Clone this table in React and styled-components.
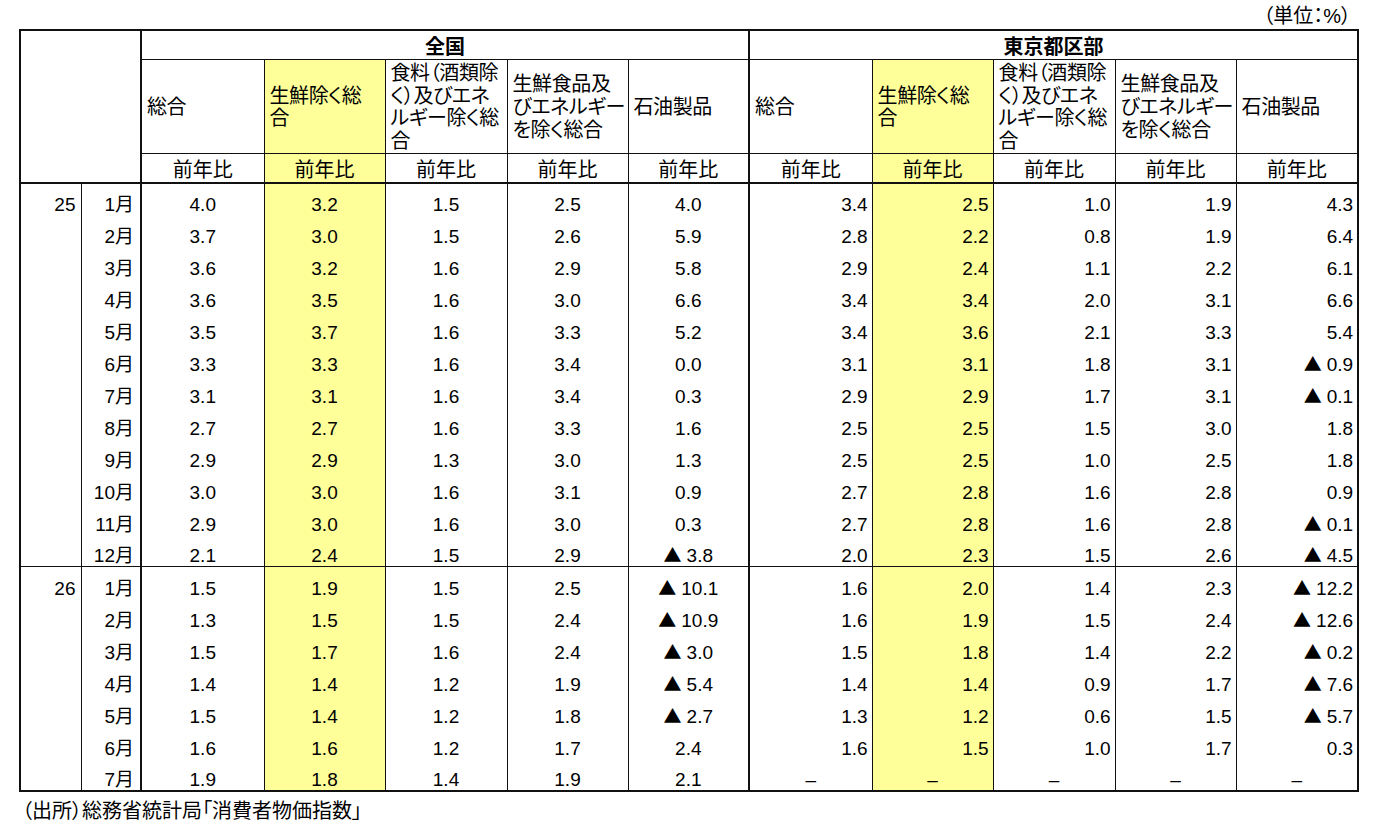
import React from "react";
import styled, { createGlobalStyle } from "styled-components";

const GlobalStyle = createGlobalStyle`
  body {
    margin: 0;
    background: #fff;
    color: #000;
    font-family: "Liberation Sans", "Noto Sans CJK JP", sans-serif;
    font-feature-settings: "palt";
  }
`;

const Page = styled.div`
  width: 1338px;
  padding: 4px 0 0 19px;
`;

const UnitLabel = styled.div`
  text-align: right;
  padding-right: 6px;
  font-size: 20px;
  line-height: 25px;
`;

const Table = styled.table`
  border-collapse: collapse;
  table-layout: fixed;
  width: 1338px;
  border: 2px solid #111;
  font-size: 19px;
`;

const Col = styled.col`
  width: ${(p) => p.$w}px;
`;

const Corner = styled.th`
  border-right: 2px solid #111;
  border-bottom: 2px solid #111;
  padding: 0;
`;

const RegionHead = styled.th`
  height: 28px;
  padding: 0;
  font-size: 20px;
  font-weight: 700;
  line-height: 23px;
  text-align: center;
  vertical-align: bottom;
  border-left: 2px solid #111;
  border-bottom: 1px solid #111;
`;

const LabelHead = styled.th`
  height: 89px;
  padding: 2px 2px 0 5px;
  font-size: 20px;
  font-weight: 400;
  line-height: 22.7px;
  letter-spacing: -0.4px;
  text-align: left;
  vertical-align: middle;
  white-space: nowrap;
  overflow: hidden;
  background: ${(p) => (p.$hl ? "#ffff99" : "#fff")};
  border-left: ${(p) => (p.$thick ? 2 : 1)}px solid #111;
  border-bottom: 1px solid #111;
`;

const SubHead = styled.th`
  height: 28px;
  padding: 0;
  font-size: 20px;
  font-weight: 400;
  line-height: 23px;
  text-align: center;
  vertical-align: bottom;
  background: ${(p) => (p.$hl ? "#ffff99" : "#fff")};
  border-left: ${(p) => (p.$thick ? 2 : 1)}px solid #111;
  border-bottom: 2px solid #111;
`;

const Row = styled.tr`
  height: 32px;
  & > td {
    border-top: ${(p) => (p.$divider ? "1px solid #111" : "none")};
  }
`;

const YearCell = styled.td`
  padding: 0 5px 0 0;
  text-align: right;
  vertical-align: bottom;
  line-height: 21px;
  border-right: 1px solid #111;
`;

const MonthCell = styled.td`
  padding: 0 6px 0 0;
  text-align: right;
  vertical-align: bottom;
  line-height: 21px;
  border-right: 2px solid #111;
`;

const Cell = styled.td`
  padding: 0 ${(p) => (p.$right ? 4 : 0)}px 0 0;
  text-align: ${(p) => (p.$right ? "right" : "center")};
  vertical-align: bottom;
  line-height: 21px;
  white-space: nowrap;
  background: ${(p) => (p.$hl ? "#ffff99" : "#fff")};
  border-left: ${(p) => (p.$thick ? 2 : 1)}px solid #111;
`;

const Tri = styled.span`
  font-family: "Noto Sans CJK JP", sans-serif;
  font-size: 18px;
  margin-right: 5px;
`;

const Source = styled.div`
  margin-top: 7px;
  padding-left: 3px;
  font-size: 20px;
  line-height: 25px;
`;

const widths = [61, 60, 123, 121, 122, 121, 121, 123, 121, 122, 121, 122];

const labels = [
  ["総合"],
  ["生鮮除く総", "合"],
  ["食料（酒類除", "く）及びエネ", "ルギー除く総", "合"],
  ["生鮮食品及", "びエネルギー", "を除く総合"],
  ["石油製品"],
];

const rows = [
  ["25", "1月", "4.0", "3.2", "1.5", "2.5", "4.0", "3.4", "2.5", "1.0", "1.9", "4.3"],
  ["", "2月", "3.7", "3.0", "1.5", "2.6", "5.9", "2.8", "2.2", "0.8", "1.9", "6.4"],
  ["", "3月", "3.6", "3.2", "1.6", "2.9", "5.8", "2.9", "2.4", "1.1", "2.2", "6.1"],
  ["", "4月", "3.6", "3.5", "1.6", "3.0", "6.6", "3.4", "3.4", "2.0", "3.1", "6.6"],
  ["", "5月", "3.5", "3.7", "1.6", "3.3", "5.2", "3.4", "3.6", "2.1", "3.3", "5.4"],
  ["", "6月", "3.3", "3.3", "1.6", "3.4", "0.0", "3.1", "3.1", "1.8", "3.1", "▲0.9"],
  ["", "7月", "3.1", "3.1", "1.6", "3.4", "0.3", "2.9", "2.9", "1.7", "3.1", "▲0.1"],
  ["", "8月", "2.7", "2.7", "1.6", "3.3", "1.6", "2.5", "2.5", "1.5", "3.0", "1.8"],
  ["", "9月", "2.9", "2.9", "1.3", "3.0", "1.3", "2.5", "2.5", "1.0", "2.5", "1.8"],
  ["", "10月", "3.0", "3.0", "1.6", "3.1", "0.9", "2.7", "2.8", "1.6", "2.8", "0.9"],
  ["", "11月", "2.9", "3.0", "1.6", "3.0", "0.3", "2.7", "2.8", "1.6", "2.8", "▲0.1"],
  ["", "12月", "2.1", "2.4", "1.5", "2.9", "▲3.8", "2.0", "2.3", "1.5", "2.6", "▲4.5"],
  ["26", "1月", "1.5", "1.9", "1.5", "2.5", "▲10.1", "1.6", "2.0", "1.4", "2.3", "▲12.2"],
  ["", "2月", "1.3", "1.5", "1.5", "2.4", "▲10.9", "1.6", "1.9", "1.5", "2.4", "▲12.6"],
  ["", "3月", "1.5", "1.7", "1.6", "2.4", "▲3.0", "1.5", "1.8", "1.4", "2.2", "▲0.2"],
  ["", "4月", "1.4", "1.4", "1.2", "1.9", "▲5.4", "1.4", "1.4", "0.9", "1.7", "▲7.6"],
  ["", "5月", "1.5", "1.4", "1.2", "1.8", "▲2.7", "1.3", "1.2", "0.6", "1.5", "▲5.7"],
  ["", "6月", "1.6", "1.6", "1.2", "1.7", "2.4", "1.6", "1.5", "1.0", "1.7", "0.3"],
  ["", "7月", "1.9", "1.8", "1.4", "1.9", "2.1", "–", "–", "–", "–", "–"],
];

const regions = ["全国", "東京都区部"];

function Value({ v }) {
  if (v.startsWith("▲")) {
    return (
      <>
        <Tri>▲</Tri>
        {v.slice(1)}
      </>
    );
  }
  return v;
}

export default function App() {
  return (
    <Page>
      <GlobalStyle />
      <UnitLabel>（単位：%）</UnitLabel>
      <Table>
        <colgroup>
          {widths.map((w, i) => (
            <Col key={i} $w={w} />
          ))}
        </colgroup>
        <thead>
          <tr>
            <Corner rowSpan={3} colSpan={2} />
            {regions.map((r) => (
              <RegionHead key={r} colSpan={5}>{r}</RegionHead>
            ))}
          </tr>
          <tr>
            {regions.map((r) =>
              labels.map((lines, i) => (
                <LabelHead key={r + i} $hl={i === 1} $thick={i === 0}>
                  {lines.map((l, j) => (
                    <React.Fragment key={j}>
                      {j > 0 && <br />}
                      {l}
                    </React.Fragment>
                  ))}
                </LabelHead>
              ))
            )}
          </tr>
          <tr>
            {regions.map((r) =>
              labels.map((_, i) => (
                <SubHead key={r + i} $hl={i === 1} $thick={i === 0}>
                  前年比
                </SubHead>
              ))
            )}
          </tr>
        </thead>
        <tbody>
          {rows.map((row, ri) => (
            <Row key={ri} $divider={ri === 12}>
              <YearCell>{row[0]}</YearCell>
              <MonthCell>{row[1]}</MonthCell>
              {row.slice(2).map((v, ci) => (
                <Cell
                  key={ci}
                  $hl={ci % 5 === 1}
                  $thick={ci === 5}
                  $right={ci >= 5 && v !== "–"}
                >
                  <Value v={v} />
                </Cell>
              ))}
            </Row>
          ))}
        </tbody>
      </Table>
      <Source>（出所）総務省統計局「消費者物価指数」</Source>
    </Page>
  );
}
